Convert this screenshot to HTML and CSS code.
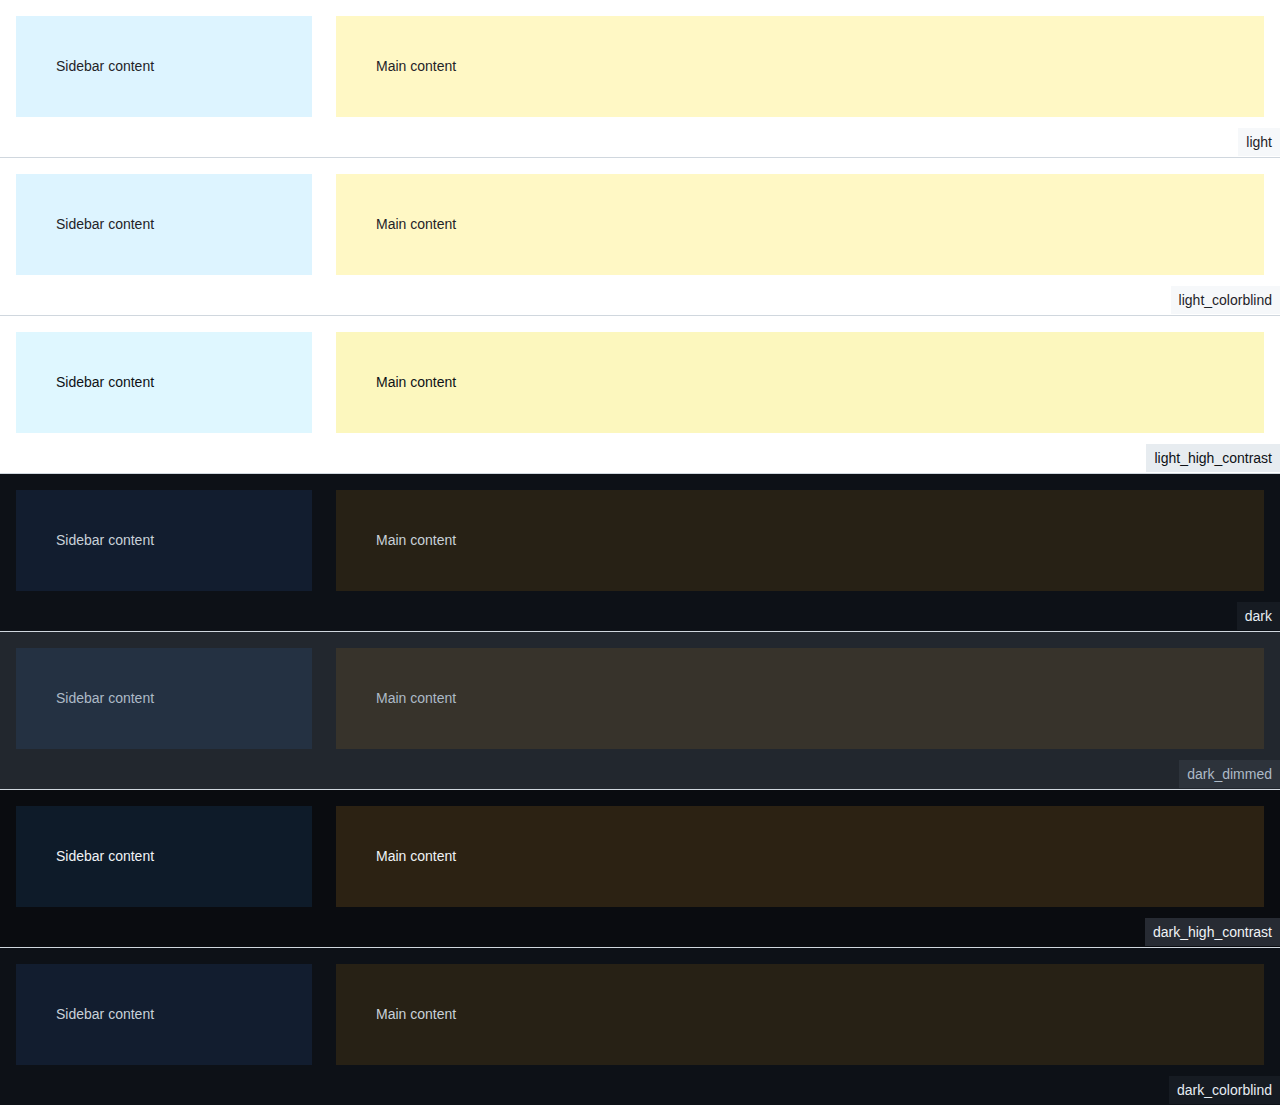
FILE: index.html
```html
<!DOCTYPE html>
<html lang="en">
<head>
<meta charset="utf-8">
<title>Themes</title>
<link rel="stylesheet" href="styles.css">
</head>
<body>
<section class="theme t-light">
  <div class="layout"><div class="sidebar">Sidebar content</div><div class="main">Main content</div></div>
  <span class="label">light</span>
</section>
<section class="theme t-light">
  <div class="layout"><div class="sidebar">Sidebar content</div><div class="main">Main content</div></div>
  <span class="label">light_colorblind</span>
</section>
<section class="theme t-lhc">
  <div class="layout"><div class="sidebar">Sidebar content</div><div class="main">Main content</div></div>
  <span class="label">light_high_contrast</span>
</section>
<section class="theme t-dark">
  <div class="layout"><div class="sidebar">Sidebar content</div><div class="main">Main content</div></div>
  <span class="label">dark</span>
</section>
<section class="theme t-dimmed">
  <div class="layout"><div class="sidebar">Sidebar content</div><div class="main">Main content</div></div>
  <span class="label">dark_dimmed</span>
</section>
<section class="theme t-dhc">
  <div class="layout"><div class="sidebar">Sidebar content</div><div class="main">Main content</div></div>
  <span class="label">dark_high_contrast</span>
</section>
<section class="theme t-dark">
  <div class="layout"><div class="sidebar">Sidebar content</div><div class="main">Main content</div></div>
  <span class="label">dark_colorblind</span>
</section>
</body>
</html>
```
FILE: styles.css
```css
html, body {
  margin: 0;
  padding: 0;
}
body {
  font-family: "Liberation Sans", Arial, sans-serif;
  font-size: 14px;
  line-height: 20px;
}
.theme {
  position: relative;
  padding: 16px 16px 40px;
  border-bottom: 1px solid #d0d7de;
}
.layout {
  display: flex;
  gap: 24px;
}
.sidebar, .main {
  padding: 40px;
  line-height: 21px;
}
.sidebar {
  width: 296px;
  box-sizing: border-box;
  flex: none;
}
.main {
  flex: 1;
}
.label {
  position: absolute;
  right: 0;
  bottom: 1px;
  padding: 4px 8px;
  line-height: 20px;
}

.t-light { background: #ffffff; color: #1f2328; }
.t-light .sidebar { background: #ddf4ff; }
.t-light .main { background: #fff8c5; }
.t-light .label { background: #f6f8fa; }

.t-lhc { background: #ffffff; color: #0e1116; }
.t-lhc .sidebar { background: #dff7ff; }
.t-lhc .main { background: #fcf7be; }
.t-lhc .label { background: #e7ecf0; }

.t-dark { background: #0d1117; color: #c9d1d9; }
.t-dark .sidebar { background: #121d2f; }
.t-dark .main { background: #272115; }
.t-dark .label { background: #161b22; color: #e6edf3; }

.t-dimmed { background: #22272e; color: #adbac7; }
.t-dimmed .sidebar { background: #243142; }
.t-dimmed .main { background: #37332b; }
.t-dimmed .label { background: #2d333b; }

.t-dhc { background: #0a0c10; color: #f0f3f6; }
.t-dhc .sidebar { background: #0e1b29; }
.t-dhc .main { background: #2c2213; }
.t-dhc .label { background: #272b33; }
```
